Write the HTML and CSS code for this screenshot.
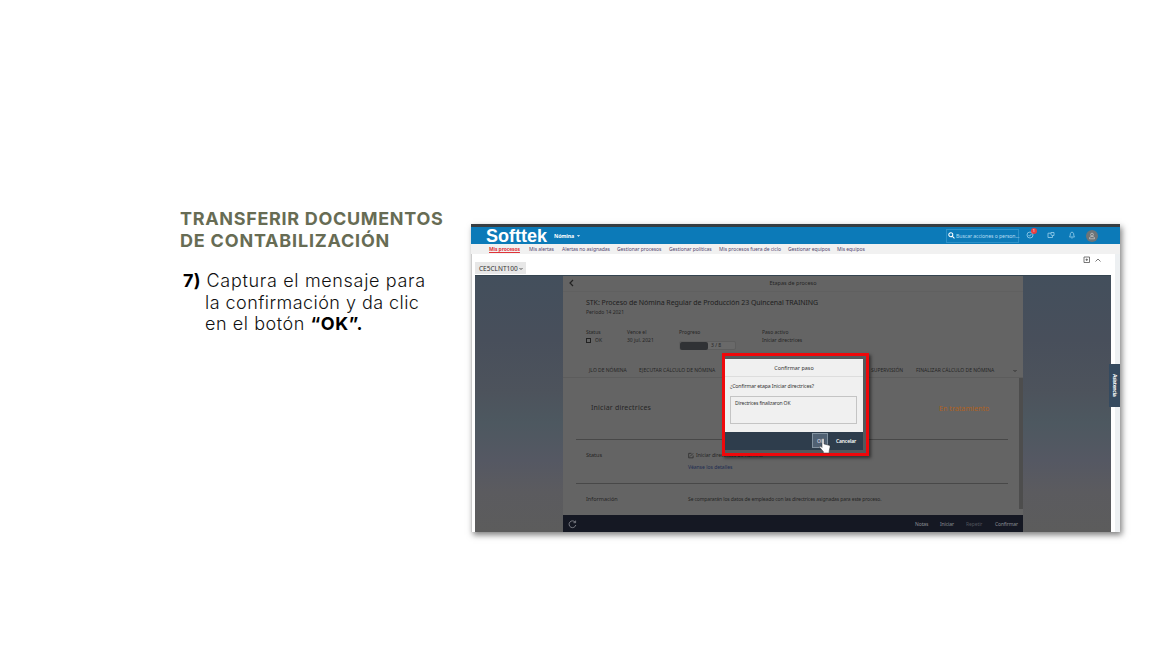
FILE: index.html
```
<!DOCTYPE html>
<html lang="es">
<head>
<meta charset="utf-8">
<title>Transferir documentos de contabilización</title>
<link rel="stylesheet" href="styles.css">
</head>
<body>
<main class="slide">
  <section class="copy">
    <h1 class="title">TRANSFERIR DOCUMENTOS<br><span class="title-b">DE CONTABILIZACIÓN</span></h1>
    <p class="step"><b class="num">7)</b> Captura el mensaje para<br><span class="line tight">la confirmación y da clic</span><br><span class="line">en el botón <b>“OK”.</b></span></p>
  </section>
  <section class="shot">
    <header class="bar">
      <span class="logo">Softtek</span>
      <span class="module">Nómina <svg class="caret" viewBox="0 0 6 4"><path d="M1 1h4L3 3z"/></svg></span>
      <span class="search"><svg viewBox="0 0 8 8"><circle cx="3.2" cy="3.2" r="2.3"/><path d="M5 5l2.4 2.4"/></svg>Buscar acciones o person...</span>
      <span class="tool todo"><svg viewBox="0 0 8 8"><circle cx="4" cy="4" r="3"/><path d="M2.5 4l1 1.2 2.3-2.7"/></svg><i class="badge">1</i></span>
      <span class="tool"><svg viewBox="0 0 8 8"><path d="M4 2.200H1v4.300h4.500V5M4 1.500h3v3H5L4 3.800z"/></svg></span>
      <span class="tool"><svg viewBox="0 0 8 8"><path d="M1.500 6C2.4 5 2.2 3 2.5 2.3 3 .8 5 .8 5.500 2.300 5.800 3 5.600 5 6.500 6zM3.400 7h1.200"/></svg></span>
      <span class="avatar"><svg viewBox="0 0 8 8"><circle cx="4" cy="2.600" r="1.400"/><path d="M1.500 6.800V6C1.500 4 6.500 4 6.500 6v.8z"/></svg></span>
    </header>
    <nav class="nav">
      <a class="on">Mis procesos</a><a>Mis alertas</a><a>Alertas no asignadas</a><a>Gestionar procesos</a><a>Gestionar políticas</a><a>Mis procesos fuera de ciclo</a><a>Gestionar equipos</a><a>Mis equipos</a>
    </nav>
    <div class="sub">
      <span class="client">CE5CLNT100 <svg viewBox="0 0 4 4"><path d="M.5 1L2 2.500 3.500 1"/></svg></span>
      <svg class="subicons" viewBox="0 0 18 8"><path d="M1 1h5.500v5.500H1zM2.500 3.700h2.500M3.700 2.500v2.500M12.500 5.500L15 3l2.500 2.500"/></svg>
    </div>
    <div class="stage">
      <div class="panel">
        <div class="phead"><svg class="back" viewBox="0 0 5 8"><path d="M4 1L1 4l3 3"/></svg><span>Etapas de proceso</span></div>
        <div class="summary">
          <div class="pname">STK: Proceso de Nómina Regular de Producción 23 Quincenal TRAINING</div>
          <div class="period">Periodo 14 2021</div>
          <div class="facts">
            <div><span>Status</span><span class="check"><i></i>OK</span></div>
            <div><span>Vence el</span><span>30 jul. 2021</span></div>
            <div><span>Progreso</span><span class="progress"><i></i>3 / 8</span></div>
            <div><span>Paso activo</span><span>Iniciar directrices</span></div>
          </div>
        </div>
        <div class="tabs"><span>JLO DE NÓMINA</span><span>EJECUTAR CÁLCULO DE NÓMINA</span><span>SUPERVISIÓN</span><span>FINALIZAR CÁLCULO DE NÓMINA</span><svg viewBox="0 0 4 4"><path d="M.5 1L2 2.500 3.500 1"/></svg></div>
        <div class="body">
          <div class="rows">
            <div class="row first"><strong>Iniciar directrices</strong><em>En tratamiento</em></div>
            <div class="row status"><span>Status</span><div class="detail"><span class="edit"><svg viewBox="0 0 7 7"><path d="M4 1H.8v5.200H6V3.500M2.500 4.500L6 1"/></svg>Iniciar directrices de nómina</span><a>Véanse los detalles</a></div></div>
            <div class="row info"><span>Información</span><small>Se compararán los datos de empleado con las directrices asignadas para este proceso.</small></div>
          </div>
          <div class="scroll"></div>
        </div>
        <div class="pfoot"><svg viewBox="0 0 9 9"><path d="M7.200 2.200A3.400 3.400 0 1 0 7.800 5M7.600.6v2.100H5.500"/></svg><span>Notas</span><span>Iniciar</span><span class="dim">Repetir</span><span>Confirmar</span></div>
      </div>
    </div>
    <div class="assist"><span>Asistencia</span></div>
    <div class="highlight">
      <div class="dialog">
        <div class="dtitle">Confirmar paso</div>
        <div class="dbody"><label>¿Confirmar etapa Iniciar directrices?</label><div class="field">Directrices finalizaron OK</div></div>
        <div class="dfoot"><span class="ok">OK</span><span>Cancelar</span></div>
      </div>
    </div>
    <svg class="hand" viewBox="0 0 12 16"><path d="M3 1.500c0-1.300 2-1.300 2 0V6l5 1.200c1 .3 1.200 1 1 2L10.200 13v2H4.300v-1.500L.8 9.500C.3 8.500 1.300 8 2 8.500l1 1z"/></svg>
  </section>
</main>
</body>
</html>
```
FILE: styles.css
```
* { box-sizing: border-box; }
body { margin: 0; background: #fff; font-family: "Noto Sans", sans-serif; }
svg { fill: none; stroke: currentColor; stroke-width: .8; display: block; flex: none; }
i, em { font-style: normal; }
.slide { width: 1152px; height: 648px; padding-left: 180px; display: flex; overflow: hidden; }
.copy { width: 291px; flex: none; padding-top: 208px; font-family: Inter, sans-serif; white-space: nowrap; }
.title { margin: 0; font-size: 18px; line-height: 22px; font-weight: 700; color: #676c54; letter-spacing: .68px; }
.title-b { letter-spacing: .8px; }
.step { margin: 18px 0 0 3px; font-size: 18px; line-height: 21.600px; color: #111; font-weight: 300; letter-spacing: .67px; }
.step b { font-weight: 700; color: #000; }
.step .num { letter-spacing: .3px; }
.line { margin-left: 22px; letter-spacing: .56px; }
.tight { letter-spacing: .45px; }

.shot { position: relative; margin-top: 224px; width: 649px; height: 308px; background: #fff; box-shadow: 2px 3px 6px rgba(0,0,0,.5); border-left: 1px solid #ccc; white-space: nowrap; }
.bar { height: 20px; margin-left: -1px; padding-left: 15px; border-top: 3px solid #363d42; background: #0c7ab8; color: #fff; display: flex; align-items: center; }
.logo { width: 68px; font: 700 18px/17px "Liberation Sans", sans-serif; padding-top: 2px; }
.module { width: 392px; font-size: 5.300px; font-weight: 700; display: flex; align-items: center; gap: 2px; letter-spacing: -.15px; }
.caret { width: 5px; height: 4px; fill: #fff; stroke: none; }
.search { width: 73px; height: 14px; border: 1px solid #2d91c8; display: flex; align-items: center; gap: 1px; padding-left: 1px; font-size: 5.200px; color: #b6dcf2; margin-right: 7px; letter-spacing: -.1px; }
.search svg { width: 7px; height: 7px; color: #fff; stroke-width: 1.200; }
.tool { width: 21px; height: 9px; position: relative; color: #9bd0ec; }
.tool svg { width: 8px; height: 8px; }
.badge { position: absolute; left: 5px; top: -3px; width: 6px; height: 6px; border-radius: 50%; background: #e83f43; color: #fff; font-size: 4px; line-height: 6px; text-align: center; }
.avatar { width: 12px; height: 12px; border-radius: 50%; background: #6e7477; color: #c4c4c4; padding: 2px; margin-left: -3px; }
.nav { height: 10px; margin-left: -1px; background: #f1f1f1; color: #53476f; font-size: 5px; line-height: 11px; display: grid; grid-template-columns: 40px 33px 55px 52px 50px 69px 49px 40px; padding-left: 18px; letter-spacing: -.05px; }
.nav .on { color: #df3338; font-weight: 700; text-decoration: underline; letter-spacing: -.1px; }
.sub { height: 21px; display: flex; justify-content: space-between; padding: 8px 14px 0 3px; border-right: 5px solid #f2f3f4; }
.client { width: 51px; height: 12px; background: #e7e7e7; color: #333; font-size: 6.500px; line-height: 11px; padding-left: 4px; display: flex; align-items: center; gap: 1px; }
.client svg { width: 4px; height: 4px; margin-top: 2px; }
.subicons { width: 18px; height: 8px; margin-top: -6px; color: #555; }
.stage { height: 257px; margin-left: 3px; width: 636px; background: linear-gradient(#434f5c 0, #484f5b 25%, #4d535c 45%, #4d5860 57%, #555863 72%, #5b5b5f 84%, #5c5c5c); border-top: 1px solid #344450; padding-left: 88px; color: #252525; }
.panel { width: 460px; height: 256px; background: #646464; display: flex; flex-direction: column; }
.phead { height: 16px; border-bottom: 1px solid #606060; position: relative; font-size: 5.500px; line-height: 15px; text-align: center; }
.back { width: 5px; height: 8px; position: absolute; left: 6px; top: 3px; stroke-width: 1.200; color: #222; }
.summary { padding: 5px 0 0 23px; height: 71px; }
.pname { font-size: 7px; line-height: 11px; color: #202020; letter-spacing: -.06px; }
.period { font-size: 5px; line-height: 9px; }
.facts { display: grid; grid-template-columns: 41px 52px 83px 90px; font-size: 5px; line-height: 8px; padding-top: 11px; }
.facts div > span { display: block; }
.facts .check { display: flex; align-items: center; gap: 4px; }
.check i { width: 5px; height: 5px; border: 1px solid #222; }
.facts .progress { display: flex; align-items: center; gap: 3px; width: 57px; height: 9px; margin-top: 5px; background: #696969; border: 1px solid #5d5d5d; border-radius: 2px; line-height: 7px; }
.progress i { width: 28px; height: 8px; background: #303235; border-radius: 2px; }
.tabs { height: 15px; display: grid; grid-template-columns: 50px 232px 45px 97px 4px; padding-left: 26px; font-size: 5px; line-height: 15px; border-bottom: 1px solid #5c5c5c; }
.tabs svg { width: 4px; height: 4px; margin-top: 6px; }
.body { height: 137px; display: flex; }
.rows { width: 456px; padding-left: 13px; padding-right: 11px; }
.row { border-bottom: 1px solid #484848; padding-left: 10px; display: grid; grid-template-columns: 102px 1fr; font-size: 5.500px; }
.row.first { height: 62px; grid-template-columns: 348px 1fr; padding-left: 15px; padding-top: 24px; line-height: 12px; }
.first strong { font-size: 7px; font-weight: 400; letter-spacing: .2px; }
.first em { color: #b0621f; font-size: 7.200px; }
.status { height: 44px; padding-top: 9px; line-height: 12px; }
.detail { display: grid; grid-template-rows: 12px 12px; font-size: 5px; }
.detail a { color: #202c52; }
.edit { display: flex; align-items: center; gap: 2px; }
.edit svg { width: 6px; height: 7px; }
.info { border: 0; padding-top: 9px; line-height: 12px; height: 31px; }
.info small { font-size: 5px; letter-spacing: -.11px; }
.scroll { width: 4px; margin: 0 0 6px 0; background: #4d4d4d; }
.pfoot { height: 17px; background: #151823; color: #8b8d94; display: grid; grid-template-columns: 347px 25px 26px 29px 1fr; font-size: 5px; line-height: 19px; padding-left: 5px; letter-spacing: -.1px; }
.pfoot svg { width: 9px; height: 9px; margin-top: 5px; }
.pfoot .dim { color: #50535c; }
.assist { position: absolute; z-index: 1; left: 637px; top: 140px; width: 11px; height: 43px; background: #354a5f; color: #fff; display: flex; align-items: center; justify-content: center; }
.assist span { writing-mode: vertical-rl; font-size: 5px; font-weight: 700; line-height: 8px; letter-spacing: -.3px; }
.shot::after { content: ""; position: absolute; right: 0; top: 30px; width: 5px; height: 278px; background: #edf0f2; }
.highlight { position: absolute; left: 250px; top: 129px; width: 147px; height: 103px; border: 3px solid #ef080b; background: #55595c; box-shadow: 2px 2px 3px rgba(0,0,0,.5); padding: 3px 3px 3px 0; }
.dialog { height: 100%; background: #f0f0f0; display: flex; flex-direction: column; font-size: 5px; color: #333; }
.dtitle { height: 18px; border-bottom: 1px solid #ddd; line-height: 18px; text-align: center; font-size: 5.400px; }
.dbody { flex: 1; padding: 5px 6px 0 5px; }
.dbody label { display: block; line-height: 8px; font-size: 5.200px; letter-spacing: -.1px; }
.field { margin-top: 6px; height: 28px; border: 1px solid #c4c4c4; padding: 3px 4px; line-height: 6px; letter-spacing: -.15px; }
.dfoot { height: 18px; background: #2e3d4c; color: #fff; display: grid; grid-template-columns: 24px 1fr; padding-left: 87px; line-height: 18px; font-weight: 600; letter-spacing: -.15px; }
.ok { width: 16px; height: 15px; margin-top: 1px; border: 1px solid #8292a0; background: #506173; padding-left: 4px; line-height: 14px; color: #ccd; }
.hand { position: absolute; left: 347px; top: 214px; width: 12px; height: 16px; fill: #fff; stroke: #333; stroke-width: .5; z-index: 2; }
```
